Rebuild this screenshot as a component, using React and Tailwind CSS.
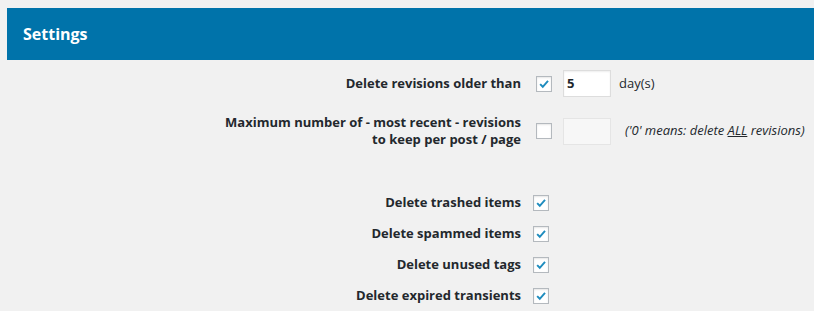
import React from 'react'

const Check = ({ checked }) => (
  <span className="flex h-4 w-4 shrink-0 items-center justify-center border border-[#b4b9be] bg-white shadow-[inset_0_1px_2px_rgba(0,0,0,0.1)]">
    {checked && (
      <svg viewBox="0 0 16 16" className="h-4 w-4">
        <path d="M3.6 8.2 L6.6 11.2 L12.6 4.4" fill="none" stroke="#1e8cbe" strokeWidth="2.2" />
      </svg>
    )}
  </span>
)

const CLEANUP = [
  'Delete trashed items',
  'Delete spammed items',
  'Delete unused tags',
  'Delete expired transients',
]

export default function App() {
  return (
    <div className="min-h-[311px] bg-[#f1f1f1] pt-2 pl-[7px] text-[13px] text-[#23282d]" style={{ fontFamily: '"Open Sans", "Noto Sans", sans-serif' }}>
      <div className="flex h-[52px] items-center bg-[#0073aa] pl-4">
        <h2 className="text-[16px] font-bold text-white">Settings</h2>
      </div>

      <div className="mt-[10px] flex flex-col">
        {/* revisions */}
        <div className="flex h-[27px] items-center">
          <label className="w-[514px] text-right font-bold">Delete revisions older than</label>
          <span className="ml-[15px]"><Check checked /></span>
          <span className="ml-[11px] flex h-[27px] w-[48px] items-center border border-[#ddd] bg-white pl-[3px] font-bold shadow-[inset_0_1px_2px_rgba(0,0,0,0.07)]">5</span>
          <span className="ml-2">day(s)</span>
        </div>

        <div className="mt-[17px] flex items-center">
          <label className="w-[514px] text-right font-bold leading-[17px]">
            Maximum number of - most recent - revisions<br />to keep per post / page
          </label>
          <span className="ml-[15px]"><Check /></span>
          <span className="ml-[11px] h-[27px] w-[48px] border border-[#e5e5e5] bg-[#f7f7f7]" />
          <span className="ml-[14px] italic">('0' means: delete <u>ALL</u> revisions)</span>
        </div>

        {/* cleanup */}
        <div className="mt-[47px] flex flex-col gap-[15px]">
          {CLEANUP.map(t => (
            <div key={t} className="flex h-4 items-center">
              <label className="w-[514px] text-right font-bold">{t}</label>
              <span className="ml-3"><Check checked /></span>
            </div>
          ))}
        </div>
      </div>
    </div>
  )
}
